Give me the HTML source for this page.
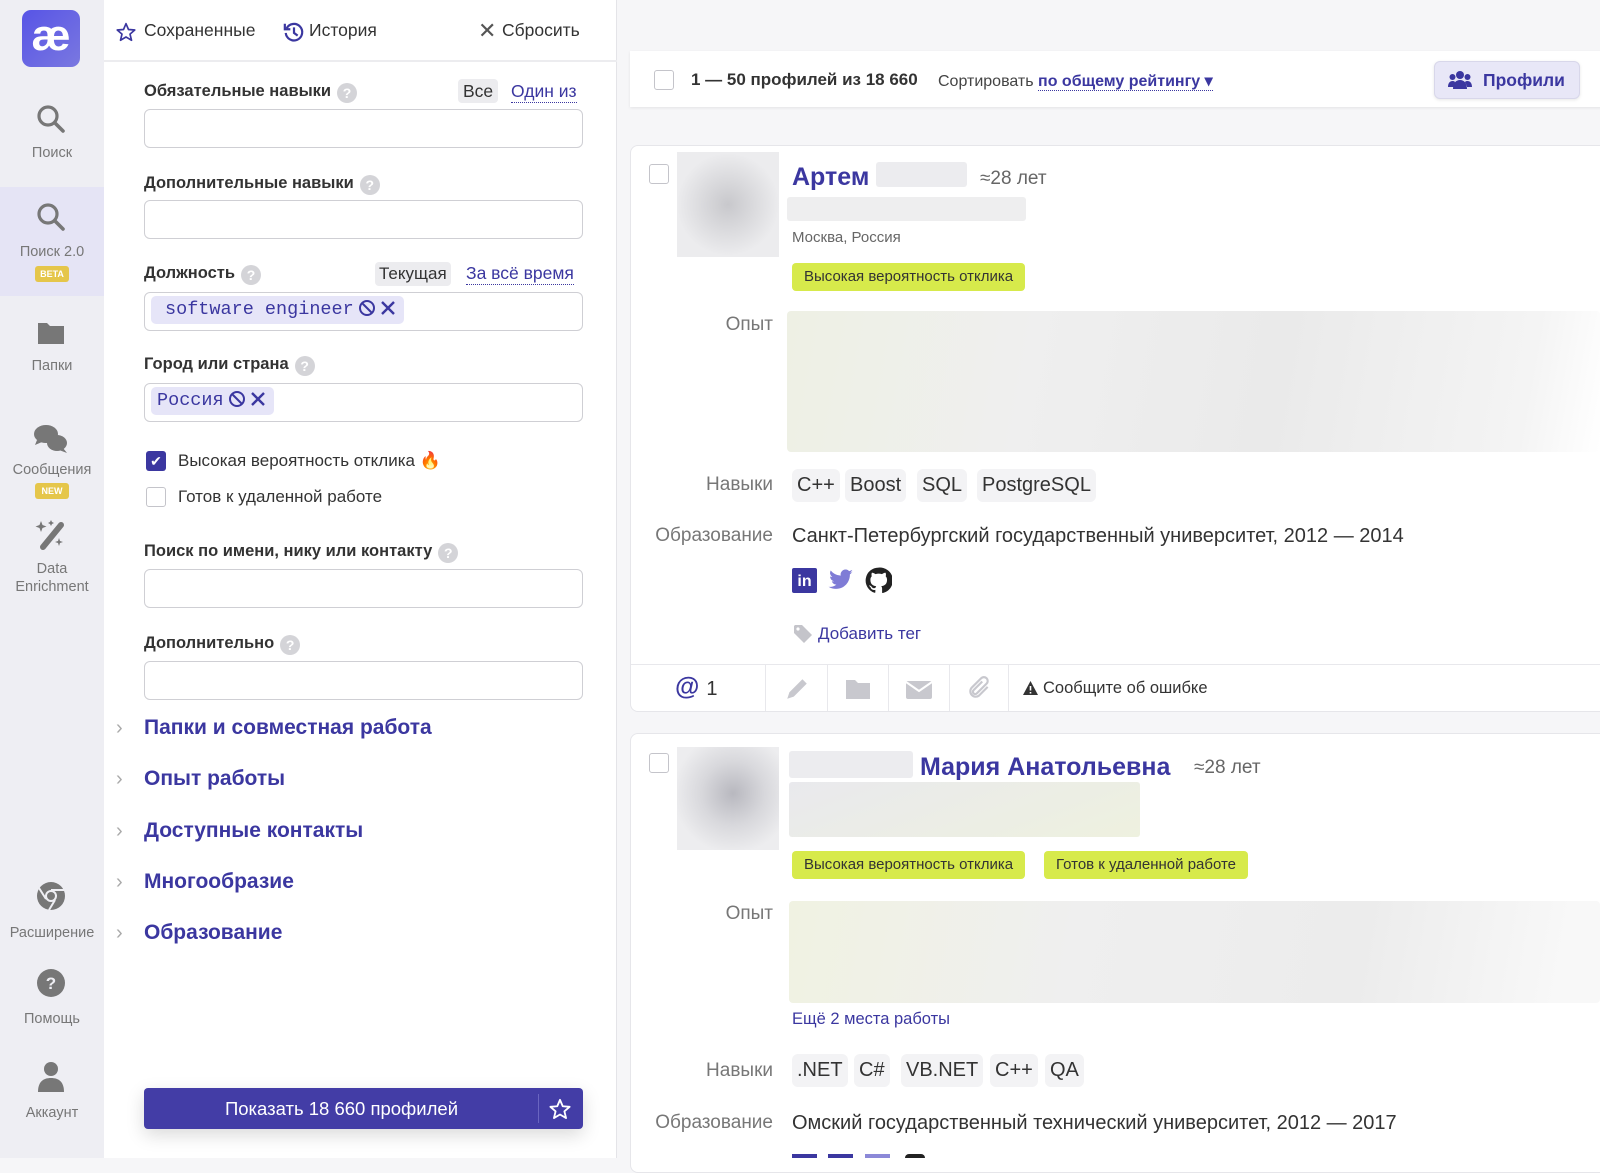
<!DOCTYPE html>
<html><head><meta charset="utf-8"><style>
*{box-sizing:border-box;margin:0;padding:0}
body{width:1600px;height:1158px;overflow:hidden;position:relative;background:#f6f6f8;font-family:"Liberation Sans",sans-serif;color:#333}
.a{position:absolute;white-space:nowrap}
.side{left:0;top:0;width:104px;height:1158px;background:#eeeef3}
.sl{width:104px;text-align:center;font-size:14.5px;color:#777;line-height:18px}
.badge{left:35px;width:34px;height:16px;border-radius:3px;background:#e5c64a;color:#fff;font-size:9px;font-weight:bold;text-align:center;line-height:16px}
.panel{left:104px;top:0;width:513px;height:1158px;background:#fff;border-right:1px solid #e4e4e8}
.lbl{left:144px;font-size:16.5px;font-weight:bold;color:#333;line-height:20px}
.q{display:inline-block;width:20px;height:20px;border-radius:50%;background:#d4d4d8;color:#fff;font-size:14px;text-align:center;line-height:20px;margin-left:6px;vertical-align:-2px}
.inp{left:144px;width:439px;height:39px;border:1.5px solid #cfcfd4;border-radius:6px;background:#fff}
.chip{background:#e6e5f8;color:#3b37a0;border-radius:5px;font-family:"Liberation Mono",monospace;font-size:18.5px;height:28px;line-height:28px;padding:0 6px 0 14px}
.chip svg{vertical-align:-3px;margin-left:4px}
.sec{left:144px;font-size:21px;font-weight:bold;color:#3b37a0;line-height:24px}
.chev{left:116px;color:#aaa;font-size:20px;line-height:24px}
.card{left:630px;width:980px;background:#fff;border:1px solid #e6e6ea;border-radius:8px}
.cb{width:20px;height:20px;border:1.5px solid #c4c4ca;border-radius:3px;background:#fff}
.blur{border-radius:3px}
.ylw{background:#d7ea4b;border-radius:4px;font-size:15px;color:#333;height:28px;line-height:28px;padding:0 12px}
.fl{font-size:19px;color:#777;text-align:right;width:150px;left:623px}
.sk{background:#f3f3f5;border-radius:6px;font-size:20px;height:33px;line-height:33px;padding:0 5px;color:#333}
.link{color:#3b37a0}
</style></head><body>

<div class="a side"></div>
<div class="a" style="left:22px;top:10px;width:58px;height:57px;border-radius:9px;background:linear-gradient(135deg,#5754e6,#7a78e0);color:#fff;font-size:44px;text-align:center;line-height:52px;font-weight:bold">æ</div>
<svg class="a" style="left:36px;top:104px" width="30" height="30" viewBox="0 0 30 30"><circle cx="12" cy="12" r="9" fill="none" stroke="#777" stroke-width="3.2"/><line x1="19" y1="19" x2="27" y2="27" stroke="#777" stroke-width="3.6" stroke-linecap="round"/></svg>
<div class="a sl" style="top:144px">Поиск</div>
<div class="a" style="left:0;top:187px;width:104px;height:109px;background:#e5e4f5"></div>
<svg class="a" style="left:36px;top:202px" width="30" height="30" viewBox="0 0 30 30"><circle cx="12" cy="12" r="9" fill="none" stroke="#777" stroke-width="3.2"/><line x1="19" y1="19" x2="27" y2="27" stroke="#777" stroke-width="3.6" stroke-linecap="round"/></svg>
<div class="a sl" style="top:243px">Поиск 2.0</div>
<div class="a badge" style="top:266px">BETA</div>
<svg class="a" style="left:37px;top:320px" width="28" height="26" viewBox="0 0 28 26"><path d="M1 3h9l3 3h14v18H1z" fill="#777"/></svg>
<div class="a sl" style="top:357px">Папки</div>
<svg class="a" style="left:33px;top:423px" width="36" height="34" viewBox="0 0 36 34"><ellipse cx="13" cy="11" rx="12" ry="9" fill="#777"/><path d="M4 17l-2 5 7-3z" fill="#777"/><ellipse cx="24" cy="20" rx="10" ry="8" fill="#777"/><path d="M30 25l4 5-8-3z" fill="#777"/></svg>
<div class="a sl" style="top:461px">Сообщения</div>
<div class="a badge" style="top:483px">NEW</div>
<svg class="a" style="left:34px;top:519px" width="34" height="32" viewBox="0 0 34 32"><line x1="9" y1="28" x2="27" y2="6" stroke="#777" stroke-width="6" stroke-linecap="round"/><path d="M7 2l1.5 4 4 1.5-4 1.5L7 13l-1.5-4-4-1.5 4-1.5z M25 19l1 3 3 1-3 1-1 3-1-3-3-1 3-1z M17 1l1 2 2 1-2 1-1 2-1-2-2-1 2-1z" fill="#777"/></svg>
<div class="a sl" style="top:560px">Data<br>Enrichment</div>
<svg class="a" style="left:36px;top:881px" width="30" height="30" viewBox="0 0 30 30"><circle cx="15" cy="15" r="14" fill="#777"/><circle cx="15" cy="15" r="6" fill="#eeeef3"/><circle cx="15" cy="15" r="4" fill="#777"/><path d="M15 9h13M10 18L3 7M19 19l-6 10" stroke="#eeeef3" stroke-width="2"/></svg>
<div class="a sl" style="top:924px">Расширение</div>
<svg class="a" style="left:36px;top:968px" width="30" height="30" viewBox="0 0 30 30"><circle cx="15" cy="15" r="14" fill="#777"/><text x="15" y="21" font-family="Liberation Sans" font-weight="bold" font-size="17" fill="#eeeef3" text-anchor="middle">?</text></svg>
<div class="a sl" style="top:1010px">Помощь</div>
<svg class="a" style="left:37px;top:1061px" width="28" height="32" viewBox="0 0 28 32"><circle cx="14" cy="8" r="7" fill="#777"/><path d="M1 31c0-10 5-14 13-14s13 4 13 14z" fill="#777"/></svg>
<div class="a sl" style="top:1104px">Аккаунт</div>

<div class="a panel"></div>
<div class="a" style="left:104px;top:60px;width:513px;height:2px;background:#ececef"></div>
<svg class="a" style="left:116px;top:22px" width="20" height="20" viewBox="0 0 24 24"><path d="M12 2l3 7 7.5.6-5.7 4.9 1.8 7.4L12 18l-6.6 3.9 1.8-7.4L1.5 9.6 9 9z" fill="none" stroke="#3b37a0" stroke-width="2" stroke-linejoin="round"/></svg>
<div class="a" style="left:144px;top:20px;font-size:17.5px;color:#333">Сохраненные</div>
<svg class="a" style="left:283px;top:21px" width="22" height="22" viewBox="0 0 24 24"><path d="M4 8a9 9 0 1 1-1 5" fill="none" stroke="#3b37a0" stroke-width="2.4"/><path d="M2 3v6h6" fill="none" stroke="#3b37a0" stroke-width="2.4"/><path d="M12 7v6l4 3" fill="none" stroke="#3b37a0" stroke-width="2.4"/></svg>
<div class="a" style="left:309px;top:20px;font-size:17.5px;color:#333">История</div>
<div class="a" style="left:478px;top:18px;font-size:22px;color:#555">✕</div>
<div class="a" style="left:502px;top:20px;font-size:17.5px;color:#333">Сбросить</div>

<div class="a lbl" style="top:81px">Обязательные навыки<span class="q">?</span></div>
<div class="a" style="left:458px;top:79px;background:#ececef;border-radius:4px;padding:0 5px;font-size:17.5px;line-height:24px">Все</div>
<div class="a link" style="left:511px;top:80px;font-size:17.5px;border-bottom:1.5px dotted #3b37a0;line-height:22px">Один из</div>
<div class="a inp" style="top:109px"></div>

<div class="a lbl" style="top:173px">Дополнительные навыки<span class="q">?</span></div>
<div class="a inp" style="top:200px"></div>

<div class="a lbl" style="top:263px">Должность<span class="q">?</span></div>
<div class="a" style="left:375px;top:262px;background:#ececef;border-radius:4px;padding:0 4px;font-size:17px;line-height:24px">Текущая</div>
<div class="a link" style="left:466px;top:262px;font-size:17.5px;border-bottom:1.5px dotted #3b37a0;line-height:22px">За всё время</div>
<div class="a inp" style="top:292px"></div>
<div class="a chip" style="left:151px;top:296px">software engineer<svg width="40" height="18" viewBox="0 0 40 18"><circle cx="9" cy="9" r="7" fill="none" stroke="#3b37a0" stroke-width="2"/><line x1="4" y1="4" x2="14" y2="14" stroke="#3b37a0" stroke-width="2"/><path d="M24 3l12 12M36 3L24 15" stroke="#3b37a0" stroke-width="2.4"/></svg></div>

<div class="a lbl" style="top:354px">Город или страна<span class="q">?</span></div>
<div class="a inp" style="top:383px"></div>
<div class="a chip" style="left:151px;top:387px;padding-left:6px">Россия<svg width="40" height="18" viewBox="0 0 40 18"><circle cx="9" cy="9" r="7" fill="none" stroke="#3b37a0" stroke-width="2"/><line x1="4" y1="4" x2="14" y2="14" stroke="#3b37a0" stroke-width="2"/><path d="M24 3l12 12M36 3L24 15" stroke="#3b37a0" stroke-width="2.4"/></svg></div>

<div class="a" style="left:146px;top:451px;width:20px;height:20px;background:#3b37a0;border-radius:3px;color:#fff;font-size:14px;text-align:center;line-height:20px">✔</div>
<div class="a" style="left:178px;top:451px;font-size:17px;color:#333">Высокая вероятность отклика <span style="color:#f0b840">🔥</span></div>
<div class="a cb" style="left:146px;top:487px"></div>
<div class="a" style="left:178px;top:487px;font-size:17px;color:#333">Готов к удаленной работе</div>

<div class="a lbl" style="top:541px">Поиск по имени, нику или контакту<span class="q">?</span></div>
<div class="a inp" style="top:569px"></div>
<div class="a lbl" style="top:633px">Дополнительно<span class="q">?</span></div>
<div class="a inp" style="top:661px"></div>

<div class="a chev" style="top:716px">›</div><div class="a sec" style="top:716px">Папки и совместная работа</div>
<div class="a chev" style="top:767px">›</div><div class="a sec" style="top:767px">Опыт работы</div>
<div class="a chev" style="top:819px">›</div><div class="a sec" style="top:819px">Доступные контакты</div>
<div class="a chev" style="top:870px">›</div><div class="a sec" style="top:870px">Многообразие</div>
<div class="a chev" style="top:921px">›</div><div class="a sec" style="top:921px">Образование</div>

<div class="a" style="left:144px;top:1088px;width:439px;height:41px;background:#433da6;border-radius:4px;box-shadow:0 6px 18px rgba(0,0,0,.15)"></div>
<div class="a" style="left:144px;top:1098px;width:395px;text-align:center;color:#fff;font-size:18.5px">Показать 18 660 профилей</div>
<div class="a" style="left:538px;top:1094px;width:1px;height:29px;background:#6a65c0"></div>
<svg class="a" style="left:549px;top:1098px" width="22" height="22" viewBox="0 0 24 24"><path d="M12 2l3 7 7.5.6-5.7 4.9 1.8 7.4L12 18l-6.6 3.9 1.8-7.4L1.5 9.6 9 9z" fill="none" stroke="#fff" stroke-width="2" stroke-linejoin="round"/></svg>

<!-- top bar -->
<div class="a" style="left:630px;top:51px;width:980px;height:56px;background:#fff;box-shadow:0 1px 3px rgba(0,0,0,.08)"></div>
<div class="a cb" style="left:654px;top:70px"></div>
<div class="a" style="left:691px;top:70px;font-size:17px;font-weight:bold;color:#333">1 — 50 профилей из 18 660</div>
<div class="a" style="left:938px;top:71px;font-size:16px;color:#444">Сортировать <span class="link" style="border-bottom:1.5px dotted #3b37a0;font-weight:bold">по общему рейтингу ▾</span></div>
<div class="a" style="left:1434px;top:61px;width:146px;height:38px;background:#e8e7f7;border:1px solid #d8d7ea;border-radius:6px;box-shadow:0 1px 3px rgba(0,0,0,.1)"></div>
<svg class="a" style="left:1448px;top:70px" width="24" height="20" viewBox="0 0 24 20"><circle cx="12" cy="5" r="4" fill="#3b37a0"/><circle cx="4.5" cy="7" r="3" fill="#3b37a0"/><circle cx="19.5" cy="7" r="3" fill="#3b37a0"/><path d="M5 19c0-6 3-9 7-9s7 3 7 9z M0 17c0-4 2-6 4.5-6 1 0 2 .3 2.5 1-1 2-1.5 3-1.5 5z M24 17c0-4-2-6-4.5-6-1 0-2 .3-2.5 1 1 2 1.5 3 1.5 5z" fill="#3b37a0"/></svg>
<div class="a link" style="left:1483px;top:70px;font-size:17.5px;font-weight:bold">Профили</div>

<!-- card 1 -->
<div class="a card" style="top:145px;height:567px"></div>
<div class="a cb" style="left:649px;top:164px"></div>
<div class="a" style="left:677px;top:152px;width:102px;height:105px;background:radial-gradient(circle at 50% 50%,#c8c8cc,#ececee 70%)"></div>
<div class="a link" style="left:792px;top:163px;font-size:25px;font-weight:bold">Артем</div>
<div class="a blur" style="left:876px;top:162px;width:91px;height:25px;background:#ececef"></div>
<div class="a" style="left:980px;top:168px;font-size:19px;color:#666">≈28 лет</div>
<div class="a blur" style="left:787px;top:197px;width:239px;height:24px;background:#eeeeef"></div>
<div class="a" style="left:792px;top:229px;font-size:15px;color:#666">Москва, Россия</div>
<div class="a ylw" style="left:792px;top:263px">Высокая вероятность отклика</div>
<div class="a fl" style="top:314px">Опыт</div>
<div class="a" style="left:787px;top:311px;width:813px;height:141px;background:linear-gradient(100deg,#eef0e4 0%,#efefef 30%,#eaeaea 60%,#f4f4f4 90%,#fff 100%);border-radius:4px"></div>
<div class="a fl" style="top:474px">Навыки</div>
<div class="a sk" style="left:792px;top:469px">C++</div>
<div class="a sk" style="left:845px;top:469px">Boost</div>
<div class="a sk" style="left:917px;top:469px">SQL</div>
<div class="a sk" style="left:977px;top:469px">PostgreSQL</div>
<div class="a fl" style="top:525px">Образование</div>
<div class="a" style="left:792px;top:525px;font-size:20px;color:#333">Санкт-Петербургский государственный университет, 2012 — 2014</div>
<div class="a" style="left:792px;top:568px;width:25px;height:25px;background:#3b37a0;color:#fff;font-weight:bold;font-size:16px;line-height:27px;text-align:center;border-radius:2px">in</div>
<svg class="a" style="left:828px;top:569px" width="26" height="22" viewBox="0 0 24 20"><path d="M23 2.5c-.8.4-1.7.6-2.6.7.9-.6 1.7-1.5 2-2.5-.9.5-1.9.9-2.9 1.1A4.5 4.5 0 0 0 11.8 6 12.8 12.8 0 0 1 2.5 1.2a4.5 4.5 0 0 0 1.4 6 4.4 4.4 0 0 1-2-.6 4.5 4.5 0 0 0 3.6 4.5 4.5 4.5 0 0 1-2 .1 4.5 4.5 0 0 0 4.2 3.1A9 9 0 0 1 .5 16.2 12.8 12.8 0 0 0 7.4 18.2c8.300 0 12.8-6.9 12.8-12.8v-.6c.9-.6 1.6-1.4 2.2-2.3z" fill="#7f7cd6"/></svg>
<svg class="a" style="left:865px;top:567px" width="27" height="27" viewBox="0 0 24 24"><path d="M12 .5a11.5 11.5 0 0 0-3.6 22.4c.6.1.8-.3.8-.6v-2c-3.2.7-3.9-1.5-3.900-1.5-.5-1.3-1.3-1.7-1.3-1.7-1-.7.1-.7.1-.7 1.2.1 1.8 1.2 1.8 1.2 1 1.8 2.7 1.3 3.4 1 .1-.8.4-1.3.7-1.600-2.6-.3-5.2-1.3-5.2-5.7 0-1.3.4-2.3 1.2-3.1-.1-.3-.5-1.5.1-3.1 0 0 1-.3 3.2 1.2a11 11 0 0 1 5.8 0c2.2-1.5 3.2-1.2 3.2-1.2.6 1.6.2 2.8.1 3.1.7.8 1.2 1.8 1.2 3.1 0 4.4-2.7 5.4-5.2 5.7.4.4.8 1.1.8 2.2v3.3c0 .3.2.7.8.6A11.5 11.5 0 0 0 12 .5z" fill="#222"/></svg>
<svg class="a" style="left:793px;top:624px" width="20" height="20" viewBox="0 0 20 20"><path d="M1 2v7l10 10 8-8L9 1H2z" fill="#c4c4ca"/><circle cx="5" cy="5" r="1.6" fill="#fff"/></svg>
<div class="a link" style="left:818px;top:624px;font-size:17px">Добавить тег</div>
<div class="a" style="left:631px;top:664px;width:969px;height:1px;background:#e8e8ec"></div>
<div class="a" style="left:765px;top:665px;width:1px;height:46px;background:#e8e8ec"></div>
<div class="a" style="left:827px;top:665px;width:1px;height:46px;background:#e8e8ec"></div>
<div class="a" style="left:888px;top:665px;width:1px;height:46px;background:#e8e8ec"></div>
<div class="a" style="left:949px;top:665px;width:1px;height:46px;background:#e8e8ec"></div>
<div class="a" style="left:1008px;top:665px;width:1px;height:46px;background:#e8e8ec"></div>
<div class="a" style="left:675px;top:673px;font-size:25px;font-weight:bold;color:#3b37a0">@ <span style="font-weight:normal;color:#333;font-size:20px">1</span></div>
<svg class="a" style="left:784px;top:676px" width="26" height="26" viewBox="0 0 24 24"><path d="M3 21l2-6L17 3l4 4L9 19z" fill="#c8c8ce"/></svg>
<svg class="a" style="left:845px;top:678px" width="26" height="22" viewBox="0 0 26 22"><path d="M1 2h9l3 3h12v16H1z" fill="#c8c8ce"/></svg>
<svg class="a" style="left:905px;top:680px" width="28" height="20" viewBox="0 0 28 20"><rect x="1" y="1" width="26" height="18" rx="2" fill="#c8c8ce"/><path d="M1 2l13 9 13-9" fill="none" stroke="#fff" stroke-width="2"/></svg>
<svg class="a" style="left:966px;top:674px" width="26" height="28" viewBox="0 0 24 24"><path d="M20 11l-8 8a5 5 0 0 1-7-7l9-9a3.5 3.5 0 0 1 5 5l-9 9a2 2 0 0 1-3-3l8-8" fill="none" stroke="#c8c8ce" stroke-width="2"/></svg>
<svg class="a" style="left:1022px;top:680px" width="17" height="16" viewBox="0 0 17 16"><path d="M8.5 1L16 15H1z" fill="#333"/><path d="M8.5 6v4.5M8.5 12v1.5" stroke="#fff" stroke-width="1.6"/></svg>
<div class="a" style="left:1043px;top:679px;font-size:16.5px;color:#333">Сообщите об ошибке</div>

<!-- card 2 -->
<div class="a card" style="top:733px;height:440px"></div>
<div class="a cb" style="left:649px;top:753px"></div>
<div class="a" style="left:677px;top:747px;width:102px;height:103px;background:radial-gradient(circle at 55% 45%,#b8b8bf,#d8d8dc 40%,#ededef 75%)"></div>
<div class="a blur" style="left:789px;top:751px;width:124px;height:27px;background:#ececef"></div>
<div class="a link" style="left:920px;top:753px;font-size:25px;font-weight:bold">Мария Анатольевна</div>
<div class="a" style="left:1194px;top:757px;font-size:19px;color:#666">≈28 лет</div>
<div class="a blur" style="left:789px;top:782px;width:351px;height:55px;background:linear-gradient(160deg,#e9e9ed,#eef1df)"></div>
<div class="a ylw" style="left:792px;top:851px">Высокая вероятность отклика</div>
<div class="a ylw" style="left:1044px;top:851px">Готов к удаленной работе</div>
<div class="a fl" style="top:903px">Опыт</div>
<div class="a" style="left:789px;top:901px;width:811px;height:102px;background:linear-gradient(100deg,#f0f2e2 0%,#efefef 35%,#ececec 70%,#f8f8f8 95%);border-radius:4px"></div>
<div class="a link" style="left:792px;top:1010px;font-size:16.5px">Ещё 2 места работы</div>
<div class="a fl" style="top:1060px">Навыки</div>
<div class="a sk" style="left:792px;top:1054px">.NET</div>
<div class="a sk" style="left:854px;top:1054px">C#</div>
<div class="a sk" style="left:901px;top:1054px">VB.NET</div>
<div class="a sk" style="left:990px;top:1054px">C++</div>
<div class="a sk" style="left:1045px;top:1054px">QA</div>
<div class="a fl" style="top:1112px">Образование</div>
<div class="a" style="left:792px;top:1112px;font-size:20px;color:#333">Омский государственный технический университет, 2012 — 2017</div>
<div class="a" style="left:792px;top:1154px;width:25px;height:4px;background:#3b37a0"></div>
<div class="a" style="left:828px;top:1154px;width:25px;height:4px;background:#3b37a0"></div>
<div class="a" style="left:865px;top:1154px;width:25px;height:4px;background:#8c89d8"></div>
<div class="a" style="left:905px;top:1154px;width:20px;height:4px;background:#222;border-radius:8px 8px 0 0"></div>
</body></html>
